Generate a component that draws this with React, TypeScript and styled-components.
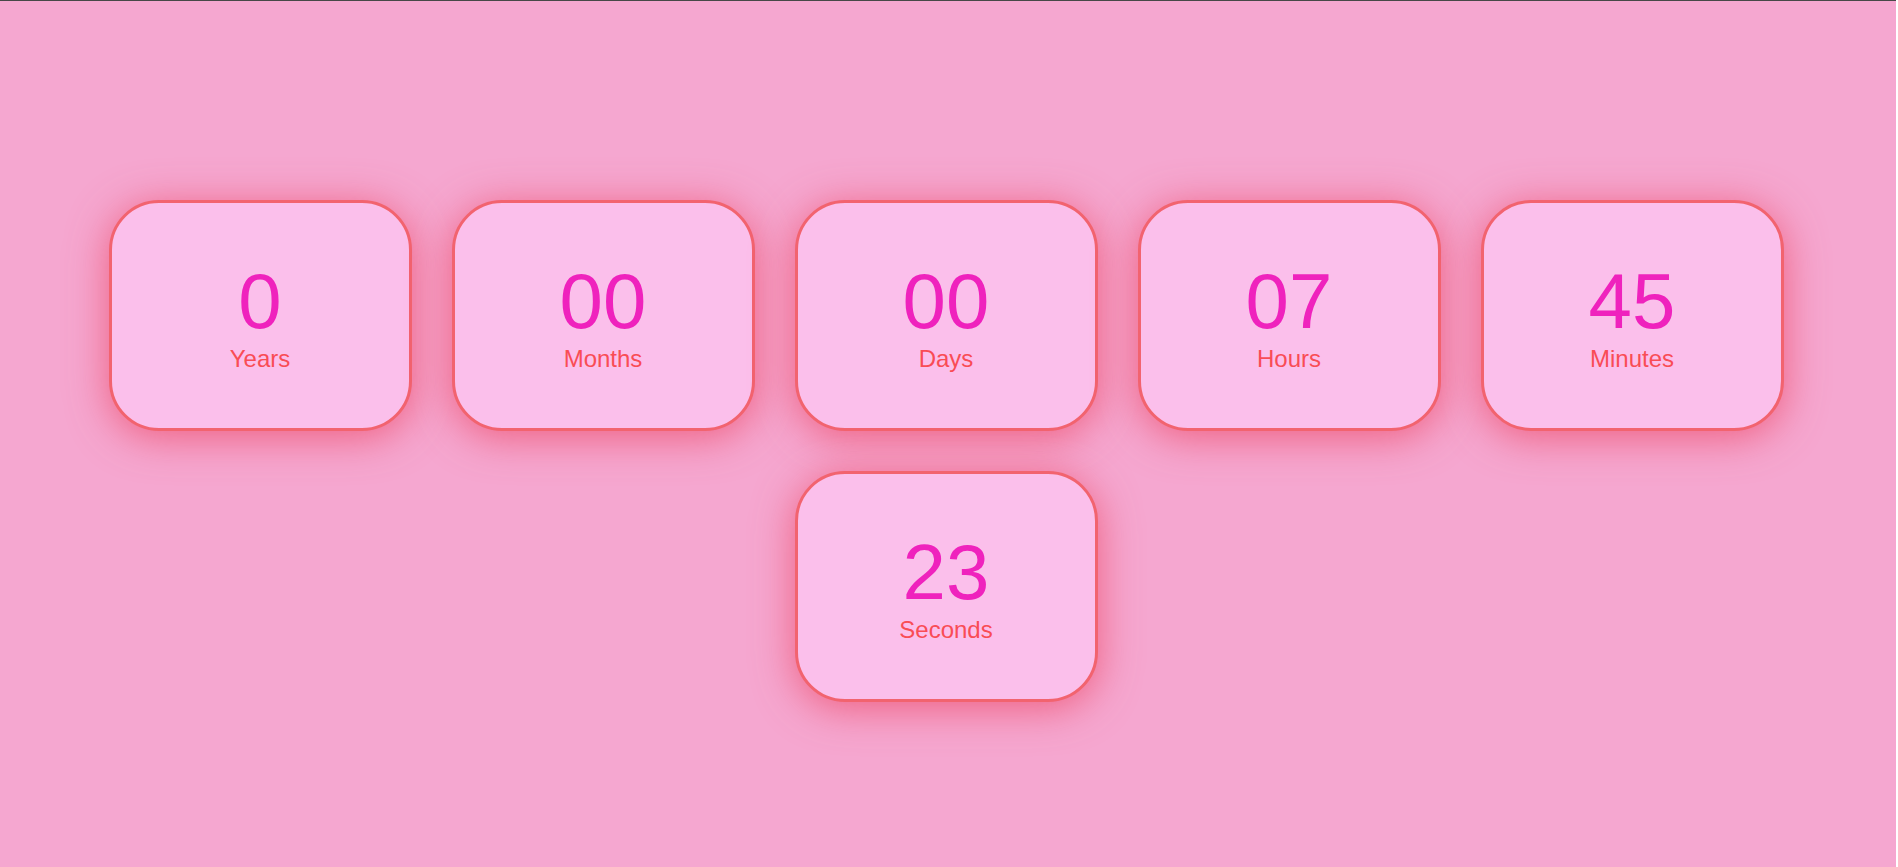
import React from "react";
import styled, { createGlobalStyle } from "styled-components";

const Global = createGlobalStyle`
  html, body { margin: 0; padding: 0; }
  body {
    background: #ffffff;
    font-family: "Liberation Sans", Arial, sans-serif;
  }
`;

const Page = styled.main`
  box-sizing: border-box;
  width: calc(100vw - 2px);
  height: 100vh;
  background: #f5a7d0;
  border-top: 1px solid #474747;
  display: flex;
  flex-wrap: wrap;
  justify-content: center;
  align-content: center;
  padding: 33px 4px 0 0;
  overflow: hidden;
`;

const Card = styled.section`
  box-sizing: border-box;
  width: 303px;
  height: 231px;
  margin: 20px;
  background: #fbbfeb;
  border: 3px solid #f2636f;
  border-radius: 50px;
  box-shadow: 0 6px 40px rgba(238, 76, 106, 0.8);
  display: flex;
  flex-direction: column;
  align-items: center;
  justify-content: center;
`;

const Value = styled.div`
  font-size: 78px;
  line-height: 1.1;
  color: #ef22bd;
  margin-top: 2px;
`;

const Label = styled.div`
  font-size: 24px;
  line-height: 1.15;
  color: #f94c55;
`;

const units: { value: string; label: string }[] = [
  { value: "0", label: "Years" },
  { value: "00", label: "Months" },
  { value: "00", label: "Days" },
  { value: "07", label: "Hours" },
  { value: "45", label: "Minutes" },
  { value: "23", label: "Seconds" },
];

export default function App() {
  return (
    <>
      <Global />
      <Page>
        {units.map((u) => (
          <Card key={u.label}>
            <Value>{u.value}</Value>
            <Label>{u.label}</Label>
          </Card>
        ))}
      </Page>
    </>
  );
}
